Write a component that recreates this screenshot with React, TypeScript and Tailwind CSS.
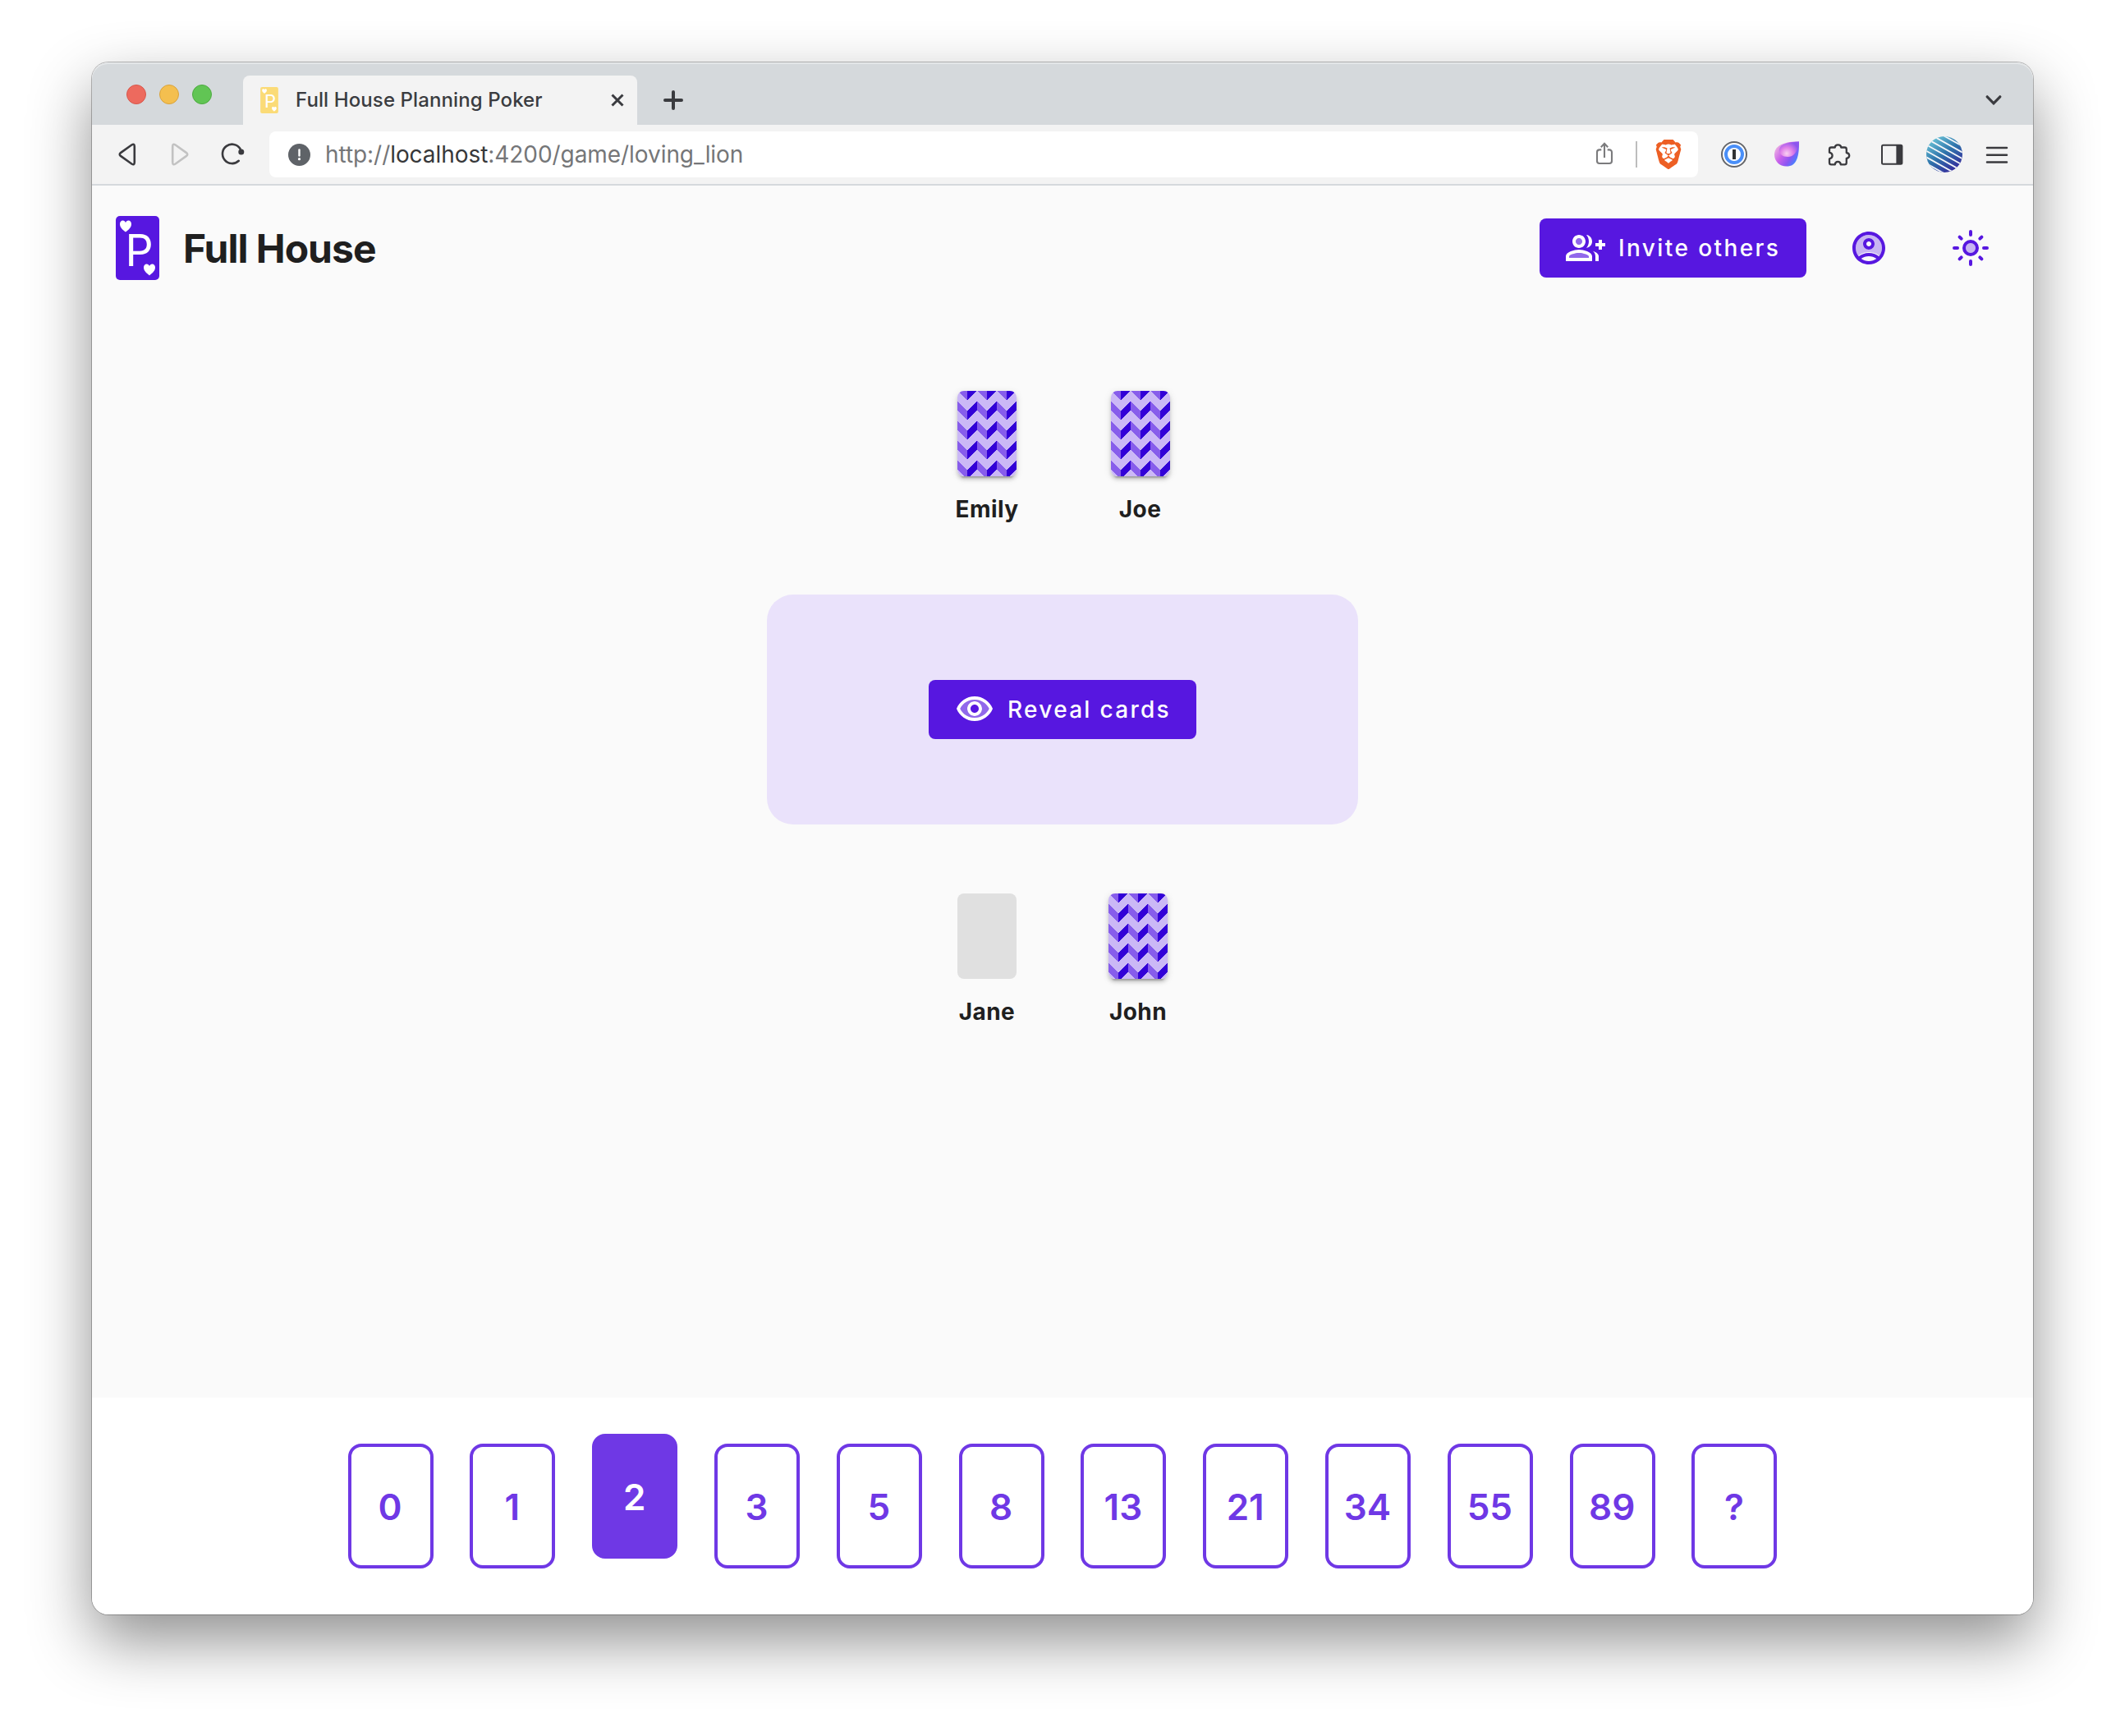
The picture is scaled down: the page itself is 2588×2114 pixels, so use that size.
import type { ReactNode } from 'react';
import { SiBrave } from 'react-icons/si';

const HEART =
  'M7 14C5.6 12.6 0 9.4 0 4.4C0 1.6 1.6 0 3.6 0C5.2 0 6.4 1 7 2.6C7.6 1 8.8 0 10.4 0C12.4 0 14 1.6 14 4.4C14 9.4 8.4 12.6 7 14Z';

function Logo({ className, fill }: { className: string; fill: string }) {
  return (
    <svg className={className} viewBox="0 0 53 78" aria-hidden>
      <rect width="53" height="78" rx="5" fill={fill} />
      <path d={HEART} fill="#fff" transform="translate(5 5.6)" />
      <path d={HEART} fill="#fff" transform="translate(34 58.4)" />
      <text x="11.6" y="61" fontFamily="Inter, sans-serif" fontSize="53.5" fontWeight="400" fill="#fff">
        P
      </text>
    </svg>
  );
}

function ToolIcon({ children }: { children: ReactNode }) {
  return (
    <svg className="size-8 shrink-0 overflow-visible" viewBox="0 0 32 32" fill="none" aria-hidden>
      {children}
    </svg>
  );
}

function MaterialIcon({ children, className = '' }: { children: ReactNode; className?: string }) {
  return (
    <svg className={`size-12 shrink-0 ${className}`} viewBox="0 0 24 24" fill="currentColor" aria-hidden>
      {children}
    </svg>
  );
}

const TRIANGLE =
  'M7.9 17.9L21.3 27.5Q24.8 29.6 24.8 25.6V6.4Q24.8 2.4 21.3 4.5L7.9 14.1Q5.6 16 7.9 17.9Z';

function TabStrip() {
  return (
    <div className="flex h-[76px] rounded-t-[20px] bg-[#d5d9dc] pr-[38px] shadow-[inset_0_2px_0_rgba(255,255,255,0.35)]">
      <div className="ml-[42px] mt-[27px] flex w-[142px] gap-4">
        <span className="size-6 rounded-full border border-[#d8574b] bg-[#ed6a5e]" />
        <span className="size-6 rounded-full border border-[#d9a33c] bg-[#f4bf4f]" />
        <span className="size-6 rounded-full border border-[#4dab40] bg-[#61c554]" />
      </div>
      <div className="flex h-[60px] w-[480px] items-center self-end rounded-t-lg bg-[#f3f3f3] pl-[21px] pr-4">
        <Logo className="h-8 w-[22px]" fill="#fbdb77" />
        <span className="ml-[21px] flex-1 whitespace-nowrap pb-px text-[24px] leading-8 font-medium tracking-[0.1px] text-[#3a3c40]">
          Full House Planning Poker
        </span>
        <svg className="size-4" viewBox="0 0 16 16" aria-hidden>
          <path d="M1.5 1.5L14.5 14.5M14.5 1.5L1.5 14.5" stroke="#3a3b3f" strokeWidth="3" />
        </svg>
      </div>
      <svg className="ml-8 mt-[34px] size-6" viewBox="0 0 24 24" aria-hidden>
        <path d="M12 2V22M2 12H22" stroke="#3a3b3f" strokeWidth="4" strokeLinecap="round" />
      </svg>
      <svg className="ml-auto mt-10 h-3 w-5" viewBox="0 0 20 12" fill="none" aria-hidden>
        <path d="M2.2 1.8L10 9.8L17.8 1.8" stroke="#3a3b3f" strokeWidth="3.2" strokeLinecap="round" />
      </svg>
    </div>
  );
}

function Toolbar() {
  return (
    <div className="flex h-[74px] items-center border-b-2 border-[#d5d9dc] bg-[#f3f3f3] pl-[27px] pr-[28px]">
      <div className="flex gap-[33px]">
        <ToolIcon>
          <path d={TRIANGLE} stroke="#3a3a3e" strokeWidth="2.6" />
        </ToolIcon>
        <ToolIcon>
          <path d={TRIANGLE} transform="translate(31 0) scale(-1 1)" stroke="#c2c2c2" strokeWidth="2.6" />
        </ToolIcon>
        <ToolIcon>
          <path d="M24.6 9.2A11.7 11.7 0 1 0 22.8 23.8" transform="translate(-1 0)" stroke="#3a3a3e" strokeWidth="2.6" strokeLinecap="round" />
          <circle cx="24.8" cy="13.1" r="3.5" fill="#3a3a3e" />
        </ToolIcon>
      </div>
      <div className="ml-[27px] flex h-14 w-[1740px] items-center rounded-lg bg-white pl-[23px] pr-[18px]">
        <svg className="size-[27px]" viewBox="0 0 27 27" aria-hidden>
          <circle cx="13.5" cy="13.5" r="13.5" fill="#5f6368" />
          <path d="M13.5 7.5V14.5" stroke="#fff" strokeWidth="2.4" strokeLinecap="round" />
          <circle cx="13.5" cy="18.7" r="1.6" fill="#fff" />
        </svg>
        <span className="ml-[18px] flex-1 whitespace-nowrap text-[28px] leading-9 tracking-[-0.06px] text-[#757678]">
          http://<span className="text-[#37383a]">localhost</span>:4200/game/loving_lion
        </span>
        <ToolIcon>
          <path
            d="M12.3 10.4H10a3 3 0 0 0-3 3V24a3 3 0 0 0 3 3h12a3 3 0 0 0 3-3V13.4a3 3 0 0 0-3-3h-2.3M16 2.8V20M11.8 7.2L16 2.8L20.2 7.2"
            stroke="#7b7b7d"
            strokeWidth="2.1"
          />
        </ToolIcon>
        <span className="ml-[22px] mr-[20px] h-8 w-[2px] bg-[#bdbdbd]" />
        <SiBrave className="size-9 shrink-0 text-[#ed5f24]" />
      </div>
      <div className="ml-7 flex gap-8">
        <ToolIcon>
          <circle cx="16" cy="16" r="15" fill="#fff" stroke="#65666a" strokeWidth="2" />
          <circle cx="16" cy="16" r="10" stroke="#4a8ff8" strokeWidth="4" />
          <rect x="14" y="10" width="4" height="12" fill="#333" />
        </ToolIcon>
        <ToolIcon>
          <defs>
            <linearGradient id="drop-outer" x1="2" y1="12" x2="26" y2="28" gradientUnits="userSpaceOnUse">
              <stop offset="0" stopColor="#e6a3e4" />
              <stop offset="0.35" stopColor="#c860ea" />
              <stop offset="0.7" stopColor="#8a55f3" />
              <stop offset="1" stopColor="#3f86ff" />
            </linearGradient>
            <radialGradient id="drop-inner" cx="16" cy="15" r="15" gradientUnits="userSpaceOnUse">
              <stop offset="0" stopColor="#f9d0f2" />
              <stop offset="0.5" stopColor="#e07fe9" />
              <stop offset="1" stopColor="#8d55ee" />
            </radialGradient>
          </defs>
          <path d="M31 .4C31.3 17.5 28.5 30.6 15.6 30.6C7.2 30.6 1 24.4 1 16.6C1 6 10.5 .2 31 .4Z" fill="url(#drop-outer)" />
          <path d="M31 .4C29.5 13 24.5 19 17.2 19C11 19 6.8 15.6 6.8 11C6.8 4.8 14 1.4 31 .4Z" fill="url(#drop-inner)" />
        </ToolIcon>
        <ToolIcon>
          <path
            d="M6.3 7.5H10.7C11 5.4 12.5 4.3 14.5 4.3S18 5.4 18.3 7.5H22.5Q24.8 7.5 24.8 9.8V14C27 14.4 28.2 15.8 28.2 17.5S27 20.6 24.8 21V26Q24.8 28.4 22.5 28.4H17.8C17.6 26 16.2 24.8 14.3 24.8S11 26 10.8 28.4H6.3Q4 28.4 4 26V21.3C6.4 20.8 7.6 19.4 7.6 17.5S6.4 14.2 4 13.7V9.8Q4 7.5 6.3 7.5Z"
            stroke="#3a3a3e"
            strokeWidth="2.3"
            strokeLinejoin="round"
          />
        </ToolIcon>
        <ToolIcon>
          <rect x="4" y="4.8" width="24.4" height="23" rx="1.5" stroke="#3a3a3e" strokeWidth="2" />
          <path d="M21.4 4.8H28.4V27.8H21.4Z" fill="#3a3a3e" />
        </ToolIcon>
      </div>
      <svg className="ml-[26px] size-11 shrink-0 rounded-full" viewBox="0 0 44 44" aria-hidden>
        <defs>
          <linearGradient id="avatar" x1="6" y1="2" x2="34" y2="42" gradientUnits="userSpaceOnUse">
            <stop offset="0" stopColor="#6cc6d8" />
            <stop offset="0.5" stopColor="#2f74ab" />
            <stop offset="1" stopColor="#352a9c" />
          </linearGradient>
        </defs>
        <rect width="44" height="44" fill="url(#avatar)" />
        <path
          d="M0 -12.6L44 12M0 -5L44 19.6M0 2.6L44 27.2M0 10.2L44 34.8M0 17.8L44 42.4M0 25.4L44 50M0 33L44 57.6"
          stroke="#f5f7fa"
          strokeWidth="1.8"
        />
      </svg>
      <svg className="ml-7 h-6 w-7" viewBox="0 0 28 24" aria-hidden>
        <path d="M2 4H26M2 12.7H26M2 21.5H26" stroke="#3a3a3e" strokeWidth="2.5" strokeLinecap="round" />
      </svg>
    </div>
  );
}

function ActionButton({ icon, label, className }: { icon: ReactNode; label: string; className: string }) {
  return (
    <button
      className={`flex h-[72px] items-center gap-4 rounded-lg bg-[#5717e0] pl-8 text-[28px] leading-10 font-medium whitespace-nowrap text-white ${className}`}
    >
      {icon}
      {label}
    </button>
  );
}

function AppHeader() {
  return (
    <header className="flex h-[152px] items-center pl-[29px] pr-[52px]">
      <Logo className="h-[78px] w-[53px]" fill="#5717e0" />
      <h1 className="ml-[29px] flex-1 pt-[2px] text-[48px] leading-[56px] font-bold tracking-[-1px] text-[#1f1f1f]">Full House</h1>
      <ActionButton
        label="Invite others"
        className="w-[325px] tracking-[2.4px]"
        icon={
          <MaterialIcon>
            <circle cx="8" cy="8" r="2" opacity="0.35" />
            <path opacity="0.35" d="M8 15c-2.7 0-5.8 1.29-6 2.01V18h12v-1c-.2-.71-3.3-2-6-2z" />
            <path d="M22 9V7h-2v2h-2v2h2v2h2v-2h2V9zM8 12c2.21 0 4-1.79 4-4s-1.79-4-4-4-4 1.79-4 4 1.79 4 4 4zm0-6c1.1 0 2 .9 2 2s-.9 2-2 2-2-.9-2-2 .9-2 2-2zM8 13c-2.67 0-8 1.34-8 4v3h16v-3c0-2.66-5.33-4-8-4zm6 5H2v-.99C2.2 16.29 5.3 15 8 15s5.8 1.29 6 2v1zM12.51 4.05C13.43 5.11 14 6.49 14 8s-.57 2.89-1.49 3.95C14.47 11.7 16 10.04 16 8s-1.53-3.7-3.49-3.95zM16.53 13.83C17.42 14.66 18 15.7 18 17v3h2v-3c0-1.45-1.59-2.51-3.47-3.17z" />
          </MaterialIcon>
        }
      />
      <MaterialIcon className="ml-[52px] text-[#5717e0]">
        <path
          opacity="0.3"
          d="M12 4c-4.41 0-8 3.59-8 8 0 1.82.62 3.49 1.64 4.83 1.43-1.74 4.9-2.33 6.36-2.33s4.93.59 6.36 2.33C19.38 15.49 20 13.82 20 12c0-4.41-3.59-8-8-8zm0 9c-1.94 0-3.5-1.56-3.5-3.5S10.06 6 12 6s3.5 1.56 3.5 3.5S13.94 13 12 13z"
        />
        <path d="M12 2C6.48 2 2 6.48 2 12s4.48 10 10 10 10-4.48 10-10S17.52 2 12 2zM7.35 18.5C8.66 17.56 10.26 17 12 17s3.34.56 4.65 1.5C15.34 19.44 13.74 20 12 20s-3.34-.56-4.65-1.5zm10.79-1.38C16.45 15.8 14.32 15 12 15s-4.45.8-6.14 2.12C4.7 15.73 4 13.95 4 12c0-4.42 3.58-8 8-8s8 3.58 8 8c0 1.95-.7 3.73-1.86 5.12z" />
        <path d="M12 6c-1.93 0-3.5 1.57-3.5 3.5S10.07 13 12 13s3.5-1.57 3.5-3.5S13.93 6 12 6zm0 5c-.83 0-1.5-.67-1.5-1.5S11.17 8 12 8s1.5.67 1.5 1.5S12.83 11 12 11z" />
      </MaterialIcon>
      <MaterialIcon className="ml-[76px] text-[#5717e0]">
        <circle cx="12" cy="12" r="3" opacity="0.3" />
        <circle cx="12" cy="12" r="4" fill="none" stroke="currentColor" strokeWidth="2" />
        <path
          d="M12 2V4M12 20V22M2 12H4M20 12H22M5.28 5.28L6.34 6.34M17.66 17.66L18.72 18.72M5.28 18.72L6.34 17.66M17.66 6.34L18.72 5.28"
          stroke="currentColor"
          strokeWidth="2"
          strokeLinecap="round"
        />
      </MaterialIcon>
    </header>
  );
}

function Player({ name, voted }: { name: string; voted: boolean }) {
  return (
    <div className="flex flex-col items-center gap-5">
      {voted ? (
        <div className="h-[104px] w-[72px] overflow-hidden rounded-lg shadow-[0_6px_2px_-4px_rgba(0,0,0,0.2),0_4px_4px_rgba(0,0,0,0.14),0_2px_10px_rgba(0,0,0,0.12)]">
          <svg className="size-full" viewBox="0 0 72 104" shapeRendering="crispEdges" aria-hidden>
            <defs>
              <pattern id={`chevron-${name}`} width="24" height="24" y="-11" patternUnits="userSpaceOnUse">
                <rect width="24" height="24" fill="#cbb8f6" />
                <path d="M0 0L12 11.5V22.5L0 11Z" fill="#875deb" />
                <path d="M24 0L12 11.5V22.5L24 11Z" fill="#3200d7" />
              </pattern>
            </defs>
            <rect width="72" height="104" fill={`url(#chevron-${name})`} />
          </svg>
        </div>
      ) : (
        <div className="h-[104px] w-[72px] rounded-lg bg-[#e0e0e0]" />
      )}
      <span className="text-[28px] leading-10 font-bold tracking-[0.45px] text-[#1f1f1f]">{name}</span>
    </div>
  );
}

const DECK = ['0', '1', '2', '3', '5', '8', '13', '21', '34', '55', '89', '?'];
const SELECTED = '2';

export default function App() {
  return (
    <div className="h-[2114px] w-[2588px] overflow-hidden bg-white pl-[112px] pt-[76px] font-['Inter',sans-serif]">
      <div className="flex h-[1890px] w-[2364px] flex-col rounded-[20px] bg-[#fafafa] shadow-[0_0_0_1px_rgba(0,0,0,0.26),0_32px_76px_rgba(0,0,0,0.44)]">
        <TabStrip />
        <Toolbar />
        <AppHeader />
        <main className="flex flex-1 flex-col items-center pt-[98px]">
          <div className="flex gap-28">
            <Player name="Emily" voted />
            <Player name="Joe" voted />
          </div>
          <div className="my-[84px] flex h-[280px] w-[720px] items-center justify-center rounded-[32px] bg-[#eae2fb]">
            <ActionButton
              label="Reveal cards"
              className="w-[326px] tracking-[2.3px]"
              icon={
                <MaterialIcon>
                  <path
                    opacity="0.35"
                    d="M12 6c-3.79 0-7.17 2.13-8.82 5.5C4.83 14.87 8.21 17 12 17s7.17-2.13 8.82-5.5C19.17 8.13 15.79 6 12 6zm0 10c-2.48 0-4.5-2.02-4.5-4.5S9.52 7 12 7s4.5 2.02 4.5 4.5S14.48 16 12 16z"
                  />
                  <path d="M12 4C7 4 2.73 7.11 1 11.5 2.73 15.89 7 19 12 19s9.27-3.11 11-7.5C21.27 7.11 17 4 12 4zm0 13c-3.79 0-7.17-2.13-8.82-5.5C4.83 8.13 8.21 6 12 6s7.17 2.13 8.82 5.5C19.17 14.87 15.79 17 12 17zm0-10c-2.48 0-4.5 2.02-4.5 4.5S9.52 16 12 16s4.5-2.02 4.5-4.5S14.48 7 12 7zm0 7c-1.38 0-2.5-1.12-2.5-2.5S10.62 9 12 9s2.5 1.12 2.5 2.5S13.38 14 12 14z" />
                </MaterialIcon>
              }
            />
          </div>
          <div className="flex gap-28">
            <Player name="Jane" voted={false} />
            <Player name="John" voted />
          </div>
        </main>
        <footer className="flex h-[264px] shrink-0 justify-center rounded-b-[20px] bg-white pt-14">
          <div className="flex w-[1741px] justify-between">
            {DECK.map((value) => (
              <button
                key={value}
                className={`flex h-[152px] w-[104px] items-center justify-center rounded-2xl border-4 border-[#6f38e5] pt-[2px] pr-px text-[44px] leading-[52px] font-[560] ${
                  value === SELECTED ? '-mt-3 bg-[#6f38e5] text-white' : 'bg-white text-[#6f38e5]'
                }`}
              >
                {value}
              </button>
            ))}
          </div>
        </footer>
      </div>
    </div>
  );
}
